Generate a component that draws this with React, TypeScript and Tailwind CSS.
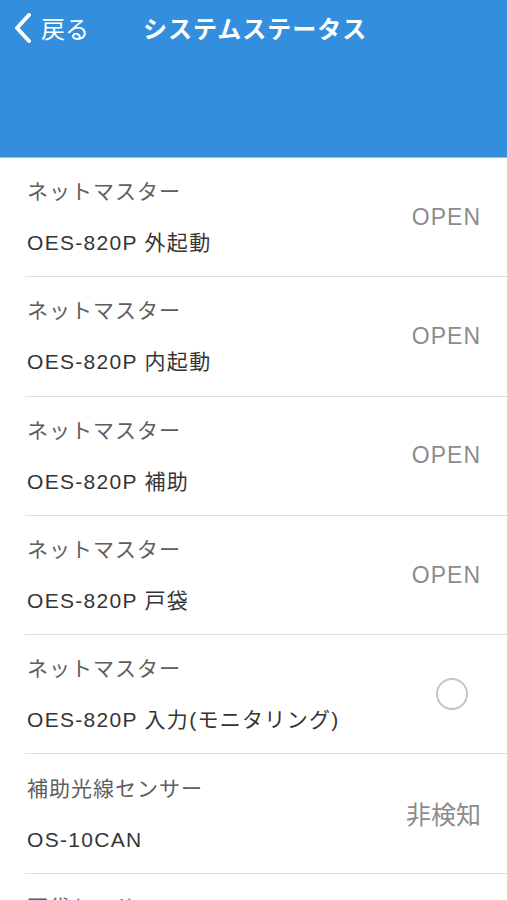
import React from "react";

const font = { fontFamily: '"Liberation Sans", "Noto Sans CJK JP", sans-serif' };
const jp = { fontFamily: '"Noto Sans CJK JP", sans-serif' };

type Row = { l1: string; l2: string; value?: string; circle?: boolean };

const rows: Row[] = [
  { l1: "ネットマスター", l2: "OES-820P 外起動", value: "OPEN" },
  { l1: "ネットマスター", l2: "OES-820P 内起動", value: "OPEN" },
  { l1: "ネットマスター", l2: "OES-820P 補助", value: "OPEN" },
  { l1: "ネットマスター", l2: "OES-820P 戸袋", value: "OPEN" },
  { l1: "ネットマスター", l2: "OES-820P 入力(モニタリング)", circle: true },
  { l1: "補助光線センサー", l2: "OS-10CAN", value: "非検知" },
  { l1: "戸袋センサー", l2: "OS-10CAN", value: "非検知" },
];

export default function App() {
  return (
    <div className="w-[507px] h-[900px] overflow-hidden bg-white" style={font}>
      <div className="h-[158px] bg-[#338fdd] border-b border-[#8cc3ef] box-border">
        <div className="flex items-center h-[56px]">
          <div className="flex items-center pl-[14px] w-[143px]">
            <svg width="18" height="30" viewBox="0 0 18 30" className="mt-[-1px]">
              <path d="M15 2 L3 15 L15 28" fill="none" stroke="white" strokeWidth="4" strokeLinecap="round" strokeLinejoin="round" />
            </svg>
            <span className="ml-[9px] text-white text-[24px] leading-none" style={jp}>戻る</span>
          </div>
          <span className="text-white text-[24px] font-bold leading-none tracking-[1px]" style={jp}>システムステータス</span>
        </div>
      </div>
      <div className="pl-[25px]">
        {rows.map((r, i) => (
          <div
            key={i}
            className="h-[119.3px] box-border border-b border-[#dedede] flex items-center justify-between pr-[26px]"
          >
            <div className="flex flex-col pl-[2px]">
              <span className="text-[21px] leading-[51px] text-[#5e5e5e] tracking-[1px]">{r.l1}</span>
              <span className="text-[21px] leading-[51px] text-[#353535] tracking-[1.3px]">{r.l2}</span>
            </div>
            {r.circle ? (
              <div className="w-[32px] h-[32px] rounded-full border-2 border-[#c4c4c4] mr-[13px]" />
            ) : r.value === "OPEN" ? (
              <span className="text-[23px] text-[#8c8c8c] leading-none tracking-[1px]">{r.value}</span>
            ) : (
              <span className="text-[25px] text-[#8c8c8c] leading-none" style={jp}>{r.value}</span>
            )}
          </div>
        ))}
      </div>
    </div>
  );
}
